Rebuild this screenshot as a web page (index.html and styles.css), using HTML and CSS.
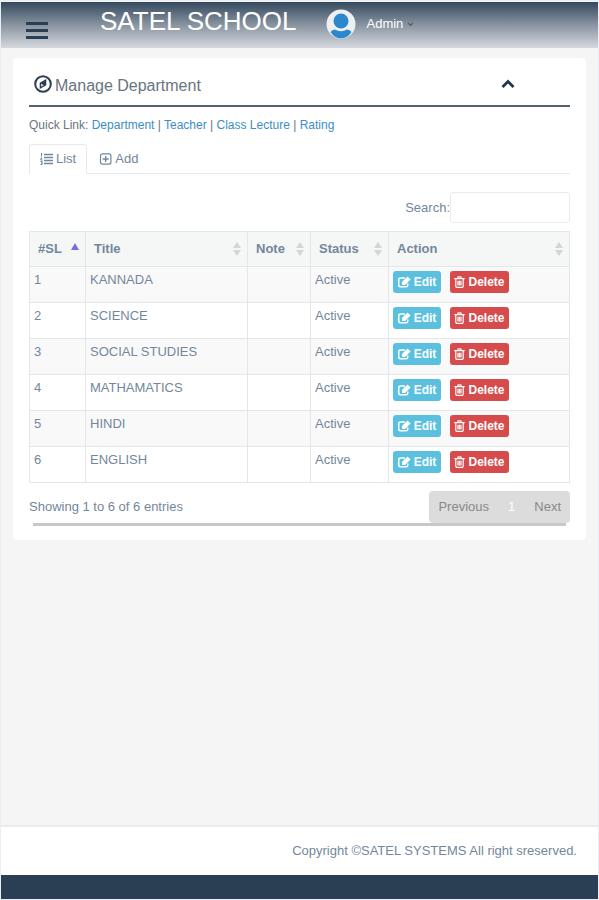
FILE: index.html
```html
<!DOCTYPE html>
<html lang="en">
<head>
<meta charset="UTF-8">
<meta name="viewport" content="width=device-width, initial-scale=1.0">
<title>Manage Department</title>
<link rel="stylesheet" href="styles.css">
</head>
<body>
<!-- shared icons -->
<svg class="sprite" width="0" height="0">
  <symbol id="icon-edit" viewBox="0 0 14 12">
    <path d="M10.5 7.5V9.5A1.7 1.7 0 0 1 8.8 11.2H2.5A1.7 1.7 0 0 1 .8 9.5V3.500A1.7 1.7 0 0 1 2.5 1.800H7.500" fill="none" stroke="currentColor" stroke-width="1.600"/>
    <path d="M4.300 9.200V6L10.300 0 13.600 3.300 7.600 9.200Z" fill="currentColor"/>
  </symbol>
  <symbol id="icon-trash" viewBox="0 0 11 12">
    <path d="M.3 2.700H10.700M3.500 2.500L4.200.8H6.800L7.500 2.500M1.800 3V10.300Q1.800 11.300 2.800 11.300H8.200Q9.200 11.300 9.200 10.300V3M4 4.800V9.500M5.500 4.800V9.500M7 4.800V9.500" fill="none" stroke="currentColor" stroke-width="1.200"/>
  </symbol>
  <symbol id="icon-sort" viewBox="0 0 8 14">
    <path d="M4 0L8 6H0ZM4 14L0 8H8Z" fill="currentColor"/>
  </symbol>
</svg>

<header class="top-nav">
  <button class="menu-toggle" aria-label="Toggle menu"><span></span><span></span><span></span></button>
  <div class="brand">SATEL SCHOOL</div>
  <a class="user" href="#">
    <svg class="avatar" viewBox="0 0 30 30">
      <circle cx="15" cy="15" r="14.500" fill="#edf0f2"/>
      <circle cx="15" cy="12" r="7.500" fill="#2d88cb"/>
      <path d="M4.500 23Q6 20.500 9 20.500Q15 24 21 20.500Q24 20.500 25.500 23Q21.500 29.300 15 29.300T4.500 23Z" fill="#2d88cb"/>
    </svg>
    <span>Admin</span>
    <svg class="caret" viewBox="0 0 7 5"><path d="M1 1L3.500 3.500 6 1" fill="none" stroke="#4c5c6c" stroke-width="1.200"/></svg>
  </a>
</header>

<main>
  <section class="panel">
    <div class="panel-title">
      <svg class="compass" viewBox="0 0 18 18">
        <circle cx="9" cy="9" r="7.800" fill="none" stroke="#2a3f54" stroke-width="2"/>
        <path d="M12.300 4V10.300L5.700 14V7.700ZM7.200 8.800V11.600L9.600 10.300Z" fill="#2a3f54" fill-rule="evenodd"/>
      </svg>
      <h1>Manage Department</h1>
      <button class="collapse" aria-label="Collapse">
        <svg viewBox="0 0 14 10"><path d="M1.500 8L7 2.500 12.500 8" fill="none" stroke="#22364a" stroke-width="2.800"/></svg>
      </button>
    </div>

    <nav class="quick-link">
      Quick Link: <a href="#">Department</a> | <a href="#">Teacher</a> | <a href="#">Class Lecture</a> | <a href="#">Rating</a>
    </nav>

    <nav class="tabs">
      <a class="tab active" href="#">
        <svg viewBox="0 0 13 12"><path d="M4 1.500H13M4 4.500H13M4 7.500H13M4 10.500H13" stroke="currentColor" stroke-width="1.500"/><path d="M1.500 0V3.500M.5 5H2L.5 7H2.500M.5 8.500H2.200V11.500H.5M1 10H2" fill="none" stroke="currentColor"/></svg>
        List
      </a>
      <a class="tab" href="#">
        <svg viewBox="0 0 13 12"><rect x="1.500" y=".8" width="10.400" height="10.400" rx="2" fill="none" stroke="currentColor" stroke-width="1.200"/><path d="M3.700 6H9.700M6.700 3V9" stroke="currentColor" stroke-width="1.400"/></svg>
        Add
      </a>
    </nav>

    <div class="filter">
      <label for="search">Search:</label>
      <input type="search" id="search">
    </div>

    <table>
      <thead>
        <tr>
          <th class="col-sl"><div>#SL <svg class="sort-asc" viewBox="0 0 8 7"><path d="M4 0L8 7H0Z" fill="currentColor"/></svg></div></th>
          <th class="col-title"><div>Title <svg class="sort"><use href="#icon-sort"/></svg></div></th>
          <th class="col-note"><div>Note <svg class="sort"><use href="#icon-sort"/></svg></div></th>
          <th class="col-status"><div>Status <svg class="sort"><use href="#icon-sort"/></svg></div></th>
          <th><div>Action <svg class="sort"><use href="#icon-sort"/></svg></div></th>
        </tr>
      </thead>
      <tbody>
        <tr>
          <td>1</td><td>KANNADA</td><td></td><td>Active</td>
          <td class="actions"><div><button class="btn edit"><svg><use href="#icon-edit"/></svg>Edit</button><button class="btn delete"><svg><use href="#icon-trash"/></svg>Delete</button></div></td>
        </tr>
        <tr>
          <td>2</td><td>SCIENCE</td><td></td><td>Active</td>
          <td class="actions"><div><button class="btn edit"><svg><use href="#icon-edit"/></svg>Edit</button><button class="btn delete"><svg><use href="#icon-trash"/></svg>Delete</button></div></td>
        </tr>
        <tr>
          <td>3</td><td>SOCIAL STUDIES</td><td></td><td>Active</td>
          <td class="actions"><div><button class="btn edit"><svg><use href="#icon-edit"/></svg>Edit</button><button class="btn delete"><svg><use href="#icon-trash"/></svg>Delete</button></div></td>
        </tr>
        <tr>
          <td>4</td><td>MATHAMATICS</td><td></td><td>Active</td>
          <td class="actions"><div><button class="btn edit"><svg><use href="#icon-edit"/></svg>Edit</button><button class="btn delete"><svg><use href="#icon-trash"/></svg>Delete</button></div></td>
        </tr>
        <tr>
          <td>5</td><td>HINDI</td><td></td><td>Active</td>
          <td class="actions"><div><button class="btn edit"><svg><use href="#icon-edit"/></svg>Edit</button><button class="btn delete"><svg><use href="#icon-trash"/></svg>Delete</button></div></td>
        </tr>
        <tr>
          <td>6</td><td>ENGLISH</td><td></td><td>Active</td>
          <td class="actions"><div><button class="btn edit"><svg><use href="#icon-edit"/></svg>Edit</button><button class="btn delete"><svg><use href="#icon-trash"/></svg>Delete</button></div></td>
        </tr>
      </tbody>
    </table>

    <div class="table-footer">
      <span>Showing 1 to 6 of 6 entries</span>
      <div class="pagination">
        <a href="#">Previous</a>
        <a class="current" href="#">1</a>
        <a href="#">Next</a>
      </div>
    </div>
    <div class="scrollbar"></div>
  </section>
</main>

<footer>Copyright ©SATEL SYSTEMS All right sreserved.</footer>
<div class="bottom-bar"></div>
</body>
</html>
```
FILE: styles.css
```css
* {
  box-sizing: border-box;
}

body {
  margin: 0;
  min-height: 100vh;
  display: flex;
  flex-direction: column;
  font-family: "Liberation Sans", Arial, sans-serif;
  font-size: 13px;
  line-height: 18px;
  color: #73879c;
  background: #f5f5f5;
  border: 1px solid #e9eff4;
}

a {
  color: inherit;
  text-decoration: none;
}

button {
  font-family: inherit;
  border: none;
  padding: 0;
  cursor: pointer;
}

.sprite {
  position: absolute;
}

/* header */
.top-nav {
  display: flex;
  align-items: flex-start;
  height: 46px;
  margin-top: 1px;
  padding: 0 25px;
  background: linear-gradient(#34495e, #8994a1 50%, #d5d9de);
}

.menu-toggle {
  display: flex;
  flex-direction: column;
  gap: 4px;
  width: 22px;
  margin-top: 20px;
  background: none;
}

.menu-toggle span {
  height: 3px;
  background: #2a3f54;
}

.brand {
  margin-left: 52px;
  font-size: 26px;
  line-height: 38px;
  color: #fff;
}

.user {
  display: flex;
  align-items: center;
  margin: 7px 0 0 29px;
  color: #fff;
}

.avatar {
  width: 30px;
  height: 30px;
  margin-right: 11px;
}

.caret {
  width: 7px;
  height: 5px;
  margin-left: 4px;
}

/* panel */
main {
  flex: 1;
  padding: 10px 12px;
}

.panel {
  padding: 0 16px 14px;
  background: #fff;
  border-radius: 4px;
}

.panel-title {
  display: flex;
  align-items: center;
  height: 49px;
  padding: 8px 55px 0 5px;
  border-bottom: 2px solid #536171;
}

.compass {
  width: 18px;
  height: 18px;
  margin: 0 3px 4px 0;
}

h1 {
  flex: 1;
  margin: 0;
  font-size: 16px;
  font-weight: normal;
  color: #687480;
}

.collapse {
  height: 10px;
  margin-bottom: 4px;
  background: none;
}

.collapse svg {
  display: block;
  width: 14px;
  height: 10px;
}

.quick-link {
  margin-top: 9px;
  font-size: 12px;
  color: #687480;
}

.quick-link a {
  color: #3c8dc5;
}

.tabs {
  display: flex;
  margin-top: 10px;
  border-bottom: 1px solid #e6e9ed;
}

.tab {
  display: flex;
  align-items: center;
  gap: 3px;
  height: 30px;
  margin-bottom: -1px;
  padding: 0 11px;
  border: 1px solid transparent;
  border-radius: 4px 4px 0 0;
}

.tab svg {
  width: 13px;
  height: 12px;
}

.tab.active {
  padding: 0 10px;
  background: #fff;
  border-color: #e6e9ed #e6e9ed #fff;
}

.filter {
  display: flex;
  justify-content: flex-end;
  align-items: center;
  margin: 18px 0 8px;
}

.filter input {
  width: 120px;
  height: 31px;
  padding: 0 8px;
  font: inherit;
  color: inherit;
  background: #fff;
  border: 1px solid #e9ecef;
  border-radius: 3px;
}

/* table */
table {
  width: 100%;
  table-layout: fixed;
  border-collapse: collapse;
}

th, td {
  border: 1px solid #e4e7ea;
  text-align: left;
}

th {
  height: 35px;
  padding: 0 6px 0 8px;
  background: #f5f6f6;
}

th div {
  display: flex;
  justify-content: space-between;
  align-items: center;
}

.col-sl {
  width: 56px;
}

.col-title {
  width: 162px;
}

.col-note {
  width: 63px;
}

.col-status {
  width: 78px;
}

.sort {
  width: 8px;
  height: 14px;
  color: #d3d6d9;
}

.sort-asc {
  width: 8px;
  height: 7px;
  margin-bottom: 5px;
  color: #766edc;
}

td {
  height: 36px;
  padding: 4px;
  vertical-align: top;
}

tbody tr:nth-child(odd) {
  background: #f9f9f9;
}

.actions div {
  display: flex;
  gap: 9px;
}

.btn {
  display: flex;
  align-items: center;
  justify-content: center;
  gap: 3px;
  height: 22px;
  border-radius: 3px;
  font-size: 12px;
  font-weight: bold;
  color: #fff;
}

.edit {
  width: 48px;
  background: #5bc0de;
}

.edit svg {
  width: 13px;
  height: 12px;
}

.delete {
  width: 59px;
  background: #d64b4b;
}

.delete svg {
  width: 11px;
  height: 12px;
}

/* below the table */
.table-footer {
  display: flex;
  justify-content: space-between;
  align-items: center;
  margin-top: 8px;
}

.pagination {
  display: flex;
  background: #dcdcdc;
  border-radius: 4px;
  color: #888;
}

.pagination a {
  padding: 7px 9px;
}

.pagination .current {
  padding: 7px 10px;
  color: #fff;
}

.scrollbar {
  height: 3px;
  margin: 0 4px;
  background: #c6c8ca;
}

footer {
  height: 50px;
  padding-right: 21px;
  line-height: 48px;
  text-align: right;
  background: #fff;
  border-top: 2px solid #eaebec;
}

.bottom-bar {
  height: 24px;
  background: #2a3f54;
}
```
